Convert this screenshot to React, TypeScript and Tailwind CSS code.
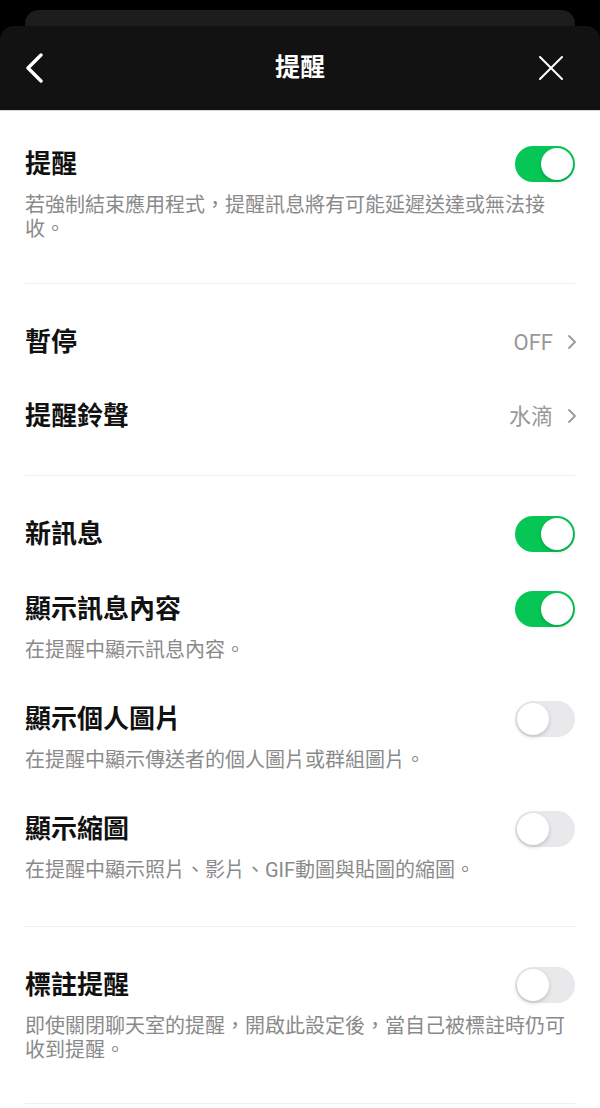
import React, { useState } from 'react';

type ToggleProps = {
  on: boolean;
  onChange: () => void;
};

const Toggle: React.FC<ToggleProps> = ({ on, onChange }) => (
  <button
    type="button"
    onClick={onChange}
    className={`relative flex h-[36px] w-[60px] shrink-0 items-center rounded-full p-[2px] ${
      on ? 'justify-end bg-[#06c755]' : 'justify-start bg-[#e9e9eb]'
    }`}
  >
    <span className="block h-[32px] w-[32px] rounded-full bg-white shadow-[0_2px_4px_rgba(0,0,0,0.18)]" />
  </button>
);

const Chevron = () => (
  <svg width="10" height="16" viewBox="0 0 10 16" fill="none" className="-mr-[2px] ml-[14px]">
    <path d="M2 2l6 6-6 6" stroke="#9a9a9a" strokeWidth="1.8" strokeLinecap="round" strokeLinejoin="round" />
  </svg>
);

const Divider = () => <div className="mx-[25px] h-px bg-[#efefef]" />;

interface SwitchRowProps {
  title: string;
  desc?: string;
  on: boolean;
  onChange: () => void;
}

const SwitchRow: React.FC<SwitchRowProps> = ({ title, desc, on, onChange }) => (
  <div>
    <div className="flex h-[36px] items-center justify-between">
      <span className="text-[26px] font-bold text-[#111]">{title}</span>
      <Toggle on={on} onChange={onChange} />
    </div>
    {desc && <p className="mt-[11px] text-[20px] leading-[24px] text-[#8a8a8a]">{desc}</p>}
  </div>
);

const LinkRow = ({ title, value }: { title: string; value: string }) => (
  <div className="flex h-[74px] items-center justify-between">
    <span className="text-[26px] font-bold text-[#111]">{title}</span>
    <span className="flex items-center text-[22px] text-[#999]">
      {value}
      <Chevron />
    </span>
  </div>
);

export default function App() {
  const [settings, setSettings] = useState({
    notify: true,
    newMsg: true,
    preview: true,
    photo: false,
    thumb: false,
    mention: false,
  });

  const flip = (key: keyof typeof settings) =>
    setSettings((s) => ({ ...s, [key]: !s[key] }));

  return (
    <div className="min-h-[1108px] bg-black pt-[10px] font-['Roboto','Noto_Sans_CJK_TC',sans-serif]">
      {/* stacked sheet behind */}
      <div className="mx-[25px] h-[16px] rounded-t-[14px] bg-[#1d1d1d]" />

      {/* header */}
      <div className="flex h-[85px] items-center rounded-t-[14px] border-b border-[#d6d6d6] bg-[#121212] px-[25px]">
        <div className="flex w-[60px] items-center">
          <button type="button" className="flex h-[30px] w-[20px] items-center">
            <svg width="20" height="30" viewBox="0 0 20 30" fill="none">
              <path d="M16 2L3 15l13 13" stroke="white" strokeWidth="3.4" strokeLinecap="round" strokeLinejoin="round" />
            </svg>
          </button>
        </div>
        <h1 className="flex-1 text-center text-[25px] font-bold text-white">提醒</h1>
        <div className="flex w-[60px] justify-end">
          <button type="button" className="mr-[11px] flex h-[26px] w-[26px] items-center justify-center">
            <svg width="26" height="26" viewBox="0 0 26 26" fill="none">
              <path d="M2 2l22 22M24 2L2 24" stroke="white" strokeWidth="2" strokeLinecap="round" />
            </svg>
          </button>
        </div>
      </div>

      <div className="bg-white pb-[4px]">
        {/* main switch */}
        <div className="px-[25px] pb-[42px] pt-[35px]">
          <SwitchRow
            title="提醒"
            desc="若強制結束應用程式，提醒訊息將有可能延遲送達或無法接收。"
            on={settings.notify}
            onChange={() => flip('notify')}
          />
        </div>
        <Divider />

        {/* pause & sound */}
        <div className="px-[25px] pb-[22px] pt-[21px]">
          <LinkRow title="暫停" value="OFF" />
          <LinkRow title="提醒鈴聲" value="水滴" />
        </div>
        <Divider />

        {/* message options */}
        <div className="flex flex-col gap-[39px] px-[25px] pb-[44px] pt-[40px]">
          <SwitchRow title="新訊息" on={settings.newMsg} onChange={() => flip('newMsg')} />
          <SwitchRow
            title="顯示訊息內容"
            desc="在提醒中顯示訊息內容。"
            on={settings.preview}
            onChange={() => flip('preview')}
          />
          <SwitchRow
            title="顯示個人圖片"
            desc="在提醒中顯示傳送者的個人圖片或群組圖片。"
            on={settings.photo}
            onChange={() => flip('photo')}
          />
          <SwitchRow
            title="顯示縮圖"
            desc="在提醒中顯示照片、影片、GIF動圖與貼圖的縮圖。"
            on={settings.thumb}
            onChange={() => flip('thumb')}
          />
        </div>
        <Divider />

        {/* mention */}
        <div className="px-[25px] pb-[41px] pt-[40px]">
          <SwitchRow
            title="標註提醒"
            desc="即使關閉聊天室的提醒，開啟此設定後，當自己被標註時仍可收到提醒。"
            on={settings.mention}
            onChange={() => flip('mention')}
          />
        </div>
        <Divider />
      </div>
    </div>
  );
}
